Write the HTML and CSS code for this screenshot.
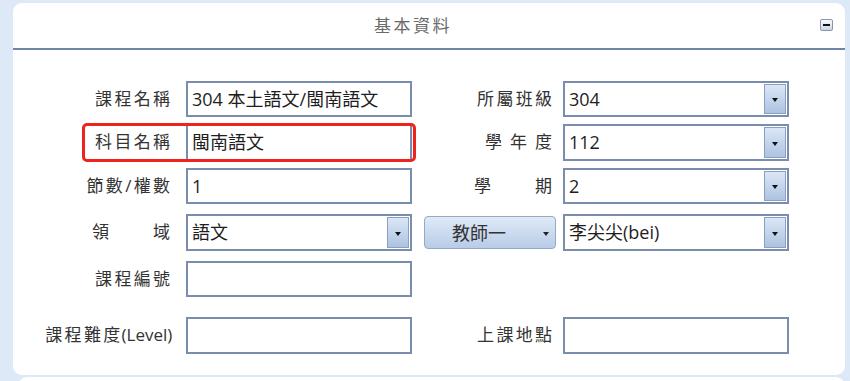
FILE: index.html
```html
<!DOCTYPE html>
<html lang="zh-Hant">
<head>
    <meta charset="UTF-8">
    <title>基本資料</title>
    <link rel="stylesheet" href="styles.css">
</head>
<body>
    <div class="panel">
        <div class="panel-head">
            <div class="panel-title">基本資料</div>
            <div class="collapse"><span></span></div>
        </div>

        <div class="form">
            <!-- row 1 -->
            <div class="label"><span>課程名稱</span></div>
            <div class="field">304 本土語文/閩南語文</div>
            <div class="label right"><span>所屬班級</span></div>
            <div class="select"><span>304</span><div class="drop"></div></div>

            <!-- row 2 -->
            <div class="label"><span>科目名稱</span></div>
            <div class="field tall">閩南語文</div>
            <div class="label right"><div class="spread narrow"><b>學</b><b>年</b><b>度</b></div></div>
            <div class="select tall"><span>112</span><div class="drop"></div></div>

            <!-- row 3 -->
            <div class="label"><span>節數/權數</span></div>
            <div class="field">1</div>
            <div class="label right"><div class="spread"><b>學</b><b>期</b></div></div>
            <div class="select"><span>2</span><div class="drop"></div></div>

            <!-- row 4 -->
            <div class="label"><div class="spread"><b>領</b><b>域</b></div></div>
            <div class="select tall"><span>語文</span><div class="drop"></div></div>
            <div class="teacher-cell"><button class="teacher-btn"><span>教師一</span><i></i></button></div>
            <div class="select tall"><span>李尖尖(bei)</span><div class="drop"></div></div>

            <!-- row 5 -->
            <div class="label"><span>課程編號</span></div>
            <div class="field"></div>
            <div></div>
            <div></div>

            <!-- row 6 -->
            <div class="label"><span>課程難度<em>(Level)</em></span></div>
            <div class="field tall"></div>
            <div class="label right"><span>上課地點</span></div>
            <div class="field tall"></div>

            <div class="highlight"></div>
        </div>
    </div>
    <div class="panel-next"></div>
</body>
</html>
```

FILE: styles.css
```css
body, html {
    margin: 0;
    padding: 0;
    height: 100%;
    overflow: hidden;
}
body {
    background: #dde9f7;
    font-family: 'Open Sans', 'Noto Sans CJK TC', sans-serif;
    color: #3a3a3a;
}
.panel {
    margin: 3px 5px 0 13px;
    height: 372px;
    background: #fff;
    border-radius: 9px;
    box-sizing: border-box;
}
.panel-head {
    height: 45px;
    display: flex;
    align-items: center;
    padding-right: 12px;
    border-bottom: 2px solid #6f85a8;
}
.panel-title {
    flex: 1;
    text-align: center;
    font-size: 17px;
    letter-spacing: 2.5px;
    color: #6a6a6a;
    margin-right: 7px;
    line-height: 20px;
}
.collapse {
    width: 13px;
    height: 12px;
    box-sizing: border-box;
    border: 1px solid #8597b3;
    border-radius: 2px;
    background: linear-gradient(#fbfbfb, #cdd5e1);
    display: flex;
    align-items: center;
    justify-content: center;
    margin-top: -2px;
}
.collapse span {
    width: 7px;
    height: 2px;
    background: #111;
}
.form {
    position: relative;
    display: grid;
    grid-template-columns: 173px 226px 151px 226px;
    grid-template-rows: 43px 44px 46px 47px 56px 37px;
    margin-top: 31px;
}
.label {
    height: 36px;
    display: flex;
    align-items: center;
    justify-content: flex-end;
    padding-right: 16px;
    font-size: 17px;
    line-height: 20px;
    color: #333;
}
.label.right {
    padding-right: 11px;
}
.label span {
    letter-spacing: 2.3px;
    margin-right: -2.3px;
    white-space: nowrap;
}
.label em {
    font-style: normal;
    letter-spacing: 0;
    margin-left: -1px;
}
.spread {
    display: flex;
    justify-content: space-between;
    width: 78px;
}
.spread.narrow {
    width: 67px;
}
.spread b {
    font-weight: normal;
}
.field, .select {
    height: 36px;
    box-sizing: border-box;
    border: 2px solid #7a8dad;
    background: #fff;
    font-size: 18px;
    line-height: 22px;
    color: #1e1e1e;
    padding: 5px 4px;
    white-space: nowrap;
}
.tall {
    height: 37px;
}
.select {
    display: flex;
    align-items: flex-start;
    padding: 0 1px 0 4px;
}
.select span {
    flex: 1;
    padding-top: 5px;
}
.drop {
    width: 22px;
    align-self: stretch;
    margin: 1px 0;
    box-sizing: border-box;
    border: 1px solid #8aa0c2;
    background: linear-gradient(#dbe7f6, #adc3e1);
    display: flex;
    align-items: center;
    justify-content: center;
}
.drop::after {
    content: '';
    border-left: 3.5px solid transparent;
    border-right: 3.5px solid transparent;
    border-top: 4px solid #111;
    margin-top: 2px;
}
.teacher-cell {
    display: flex;
    justify-content: flex-end;
    align-items: center;
    height: 37px;
    padding-right: 7px;
}
.teacher-btn {
    width: 132px;
    height: 33px;
    box-sizing: border-box;
    border: 1px solid #93a9c9;
    border-radius: 4px;
    background: linear-gradient(#e0eaf7, #b8cce7);
    font-family: inherit;
    font-size: 18px;
    color: #333;
    display: flex;
    align-items: center;
    padding: 0 6px 0 27px;
    cursor: pointer;
}
.teacher-btn span {
    flex: 1;
    text-align: left;
    line-height: 22px;
}
.teacher-btn i {
    border-left: 3.5px solid transparent;
    border-right: 3.5px solid transparent;
    border-top: 4px solid #222;
    margin-top: 2px;
}
.highlight {
    position: absolute;
    left: 69px;
    top: 42px;
    width: 334px;
    height: 39px;
    box-sizing: border-box;
    border: 3px solid #f0221c;
    border-radius: 5px;
}
.panel-next {
    margin: 2px 5px 0 18px;
    height: 20px;
    background: #fff;
    border-radius: 9px 9px 0 0;
}
```
